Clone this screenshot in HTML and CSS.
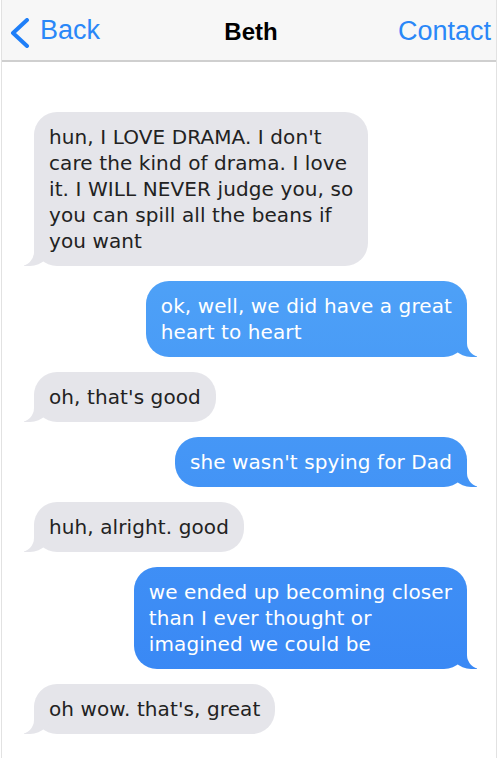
FILE: index.html
```html
<!DOCTYPE html>
<html lang="en">
<head>
  <meta charset="UTF-8" />
  <meta name="viewport" content="width=device-width, initial-scale=1.0" />
  <title>Beth</title>
  <link rel="stylesheet" href="styles.css">
</head>
<body>
  <div class="phone">

    <!-- Nav bar -->
    <div class="nav">
      <a class="nav-btn back" href="#">
        <svg class="chevron" width="22" height="30" viewBox="0 0 22 30">
          <polyline points="18,2 4,15 18,28" fill="none" stroke="#1f7ff8" stroke-width="4" stroke-linecap="round" stroke-linejoin="round" />
        </svg>
        <span>Back</span>
      </a>
      <div class="nav-title">Beth</div>
      <a class="nav-btn contact" href="#">Contact</a>
    </div>

    <!-- Messages (lines broken like the phone did) -->
    <div class="chat">
      <div class="msg them">hun, I LOVE DRAMA. I don't<br>care the kind of drama. I love<br>it. I WILL NEVER judge you, so<br>you can spill all the beans if<br>you want</div>
      <div class="msg me">ok, well, we did have a great<br>heart to heart</div>
      <div class="msg them">oh, that's good</div>
      <div class="msg me">she wasn't spying for Dad</div>
      <div class="msg them">huh, alright. good</div>
      <div class="msg me">we ended up becoming closer<br>than I ever thought or<br>imagined we could be</div>
      <div class="msg them">oh wow. that's, great</div>
    </div>

  </div>
</body>
</html>
```

FILE: styles.css
```css
* {
  margin: 0;
  padding: 0;
  box-sizing: border-box;
}

body {
  background: #fff;
  font-family: "Liberation Sans", Arial, sans-serif;
}

.phone {
  width: 496px;
  min-height: 100vh;
  margin-left: 1px;
  border-left: 1px solid #e2e2e2;
  border-right: 1px solid #e2e2e2;
}

/* top bar */
.nav {
  height: 62px;
  display: flex;
  justify-content: space-between;
  align-items: center;
  padding: 0 5px 0 7px;
  background: #f7f7f7;
  border-bottom: 2px solid #cfcfcf;
}

.nav-btn {
  display: flex;
  align-items: center;
  gap: 9px;
  color: #2a87f8;
  font-size: 27px;
  text-decoration: none;
}

.chevron {
  margin-top: 5px;
}

.nav-title {
  font-size: 24px;
  font-weight: bold;
  color: #000;
  margin-left: 4px;
  margin-top: 3px;
}

.contact {
  margin-top: 2px;
}

/* bubbles */
.chat {
  display: flex;
  flex-direction: column;
  gap: 15px;
  padding: 50px 29px 20px 32px;
}

.msg {
  position: relative;
  z-index: 0;
  padding: 12px 15px;
  border-radius: 23px;
  white-space: nowrap;
  font-family: "DejaVu Sans", Verdana, sans-serif;
  font-size: 20px;
  line-height: 26px;
  letter-spacing: 0.1px;
}

.them {
  align-self: flex-start;
  background: #e5e5ea;
  color: #222;
}

.me {
  align-self: flex-end;
  color: #fff;
  background: linear-gradient(to bottom, #5cb2f9, #3583f4) fixed;
}

/* tails */
.msg::before,
.msg::after {
  content: "";
  position: absolute;
  z-index: -1;
  bottom: 0;
  height: 28px;
}

.them::before {
  left: -10px;
  width: 28px;
  background: #e5e5ea;
  border-bottom-right-radius: 22px;
}

.them::after {
  left: -15px;
  width: 15px;
  background: #fff;
  border-bottom-right-radius: 14px;
}

.me::before {
  right: -10px;
  width: 28px;
  background: linear-gradient(to bottom, #5cb2f9, #3583f4) fixed;
  border-bottom-left-radius: 22px;
}

.me::after {
  right: -15px;
  width: 15px;
  background: #fff;
  border-bottom-left-radius: 14px;
}
```
